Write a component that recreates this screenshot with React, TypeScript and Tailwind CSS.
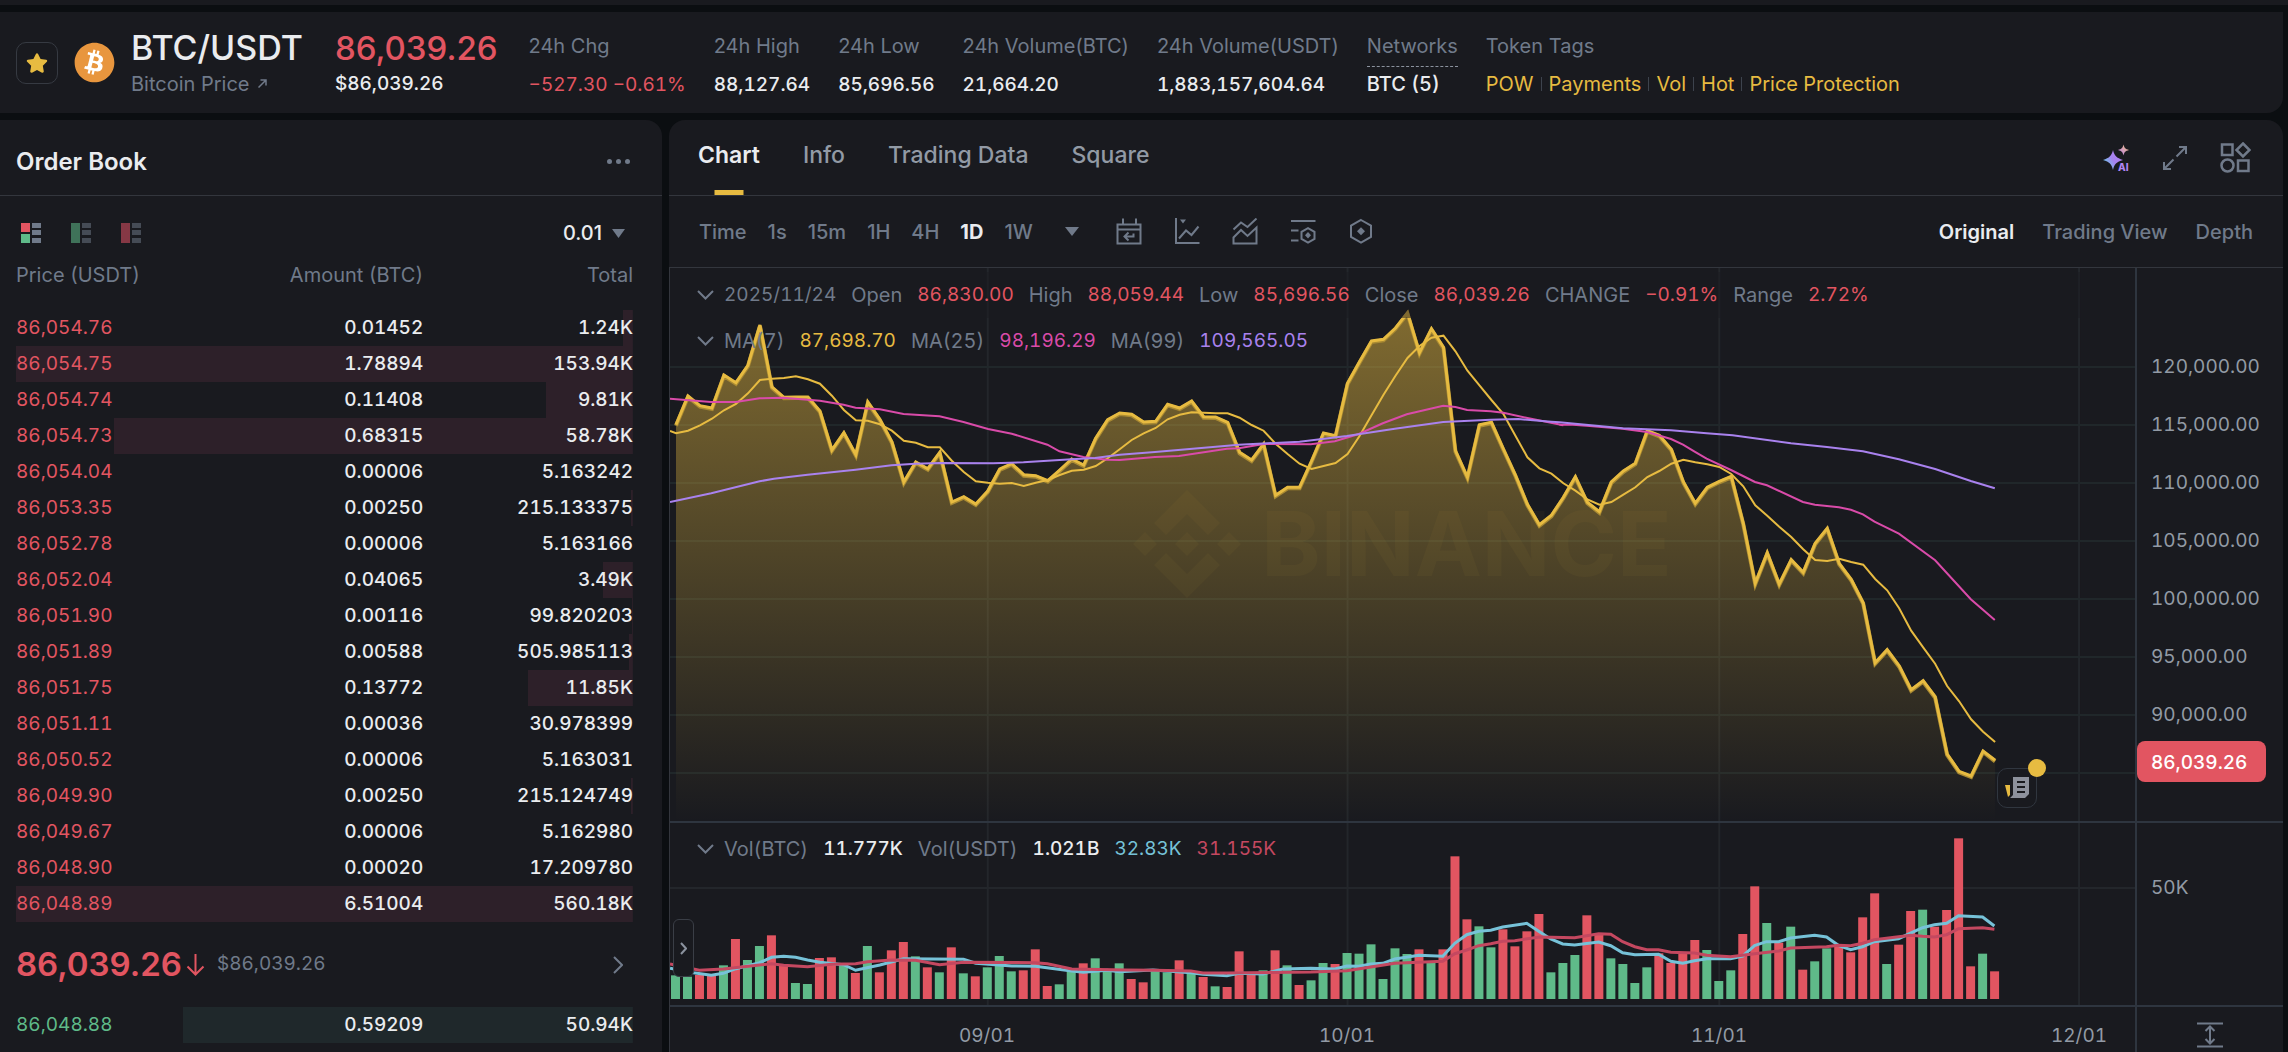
import type { ReactNode } from "react";
import { FaBitcoin, FaStar } from "react-icons/fa";

/* ---------- market data ---------- */

type Order = { price: string; amount: string; total: string; depth: number };

const asks: Order[] = [
  { price: "86,054.76", amount: "0.01452", total: "1.24K", depth: 10 },
  { price: "86,054.75", amount: "1.78894", total: "153.94K", depth: 617 },
  { price: "86,054.74", amount: "0.11408", total: "9.81K", depth: 87 },
  { price: "86,054.73", amount: "0.68315", total: "58.78K", depth: 519 },
  { price: "86,054.04", amount: "0.00006", total: "5.163242", depth: 0 },
  { price: "86,053.35", amount: "0.00250", total: "215.133375", depth: 2 },
  { price: "86,052.78", amount: "0.00006", total: "5.163166", depth: 0 },
  { price: "86,052.04", amount: "0.04065", total: "3.49K", depth: 30 },
  { price: "86,051.90", amount: "0.00116", total: "99.820203", depth: 1 },
  { price: "86,051.89", amount: "0.00588", total: "505.985113", depth: 4 },
  { price: "86,051.75", amount: "0.13772", total: "11.85K", depth: 105 },
  { price: "86,051.11", amount: "0.00036", total: "30.978399", depth: 0 },
  { price: "86,050.52", amount: "0.00006", total: "5.163031", depth: 0 },
  { price: "86,049.90", amount: "0.00250", total: "215.124749", depth: 2 },
  { price: "86,049.67", amount: "0.00006", total: "5.162980", depth: 0 },
  { price: "86,048.90", amount: "0.00020", total: "17.209780", depth: 0 },
  { price: "86,048.89", amount: "6.51004", total: "560.18K", depth: 617 },
];

const bids: Order[] = [{ price: "86,048.88", amount: "0.59209", total: "50.94K", depth: 450 }];

const stats = [
  { label: "24h High", value: "88,127.64" },
  { label: "24h Low", value: "85,696.56" },
  { label: "24h Volume(BTC)", value: "21,664.20" },
  { label: "24h Volume(USDT)", value: "1,883,157,604.64" },
];

const tags = ["POW", "Payments", "Vol", "Hot", "Price Protection"];

/* ---------- chart series (thirds of a pixel, one value per day) ---------- */

const STEP = 12;
const FIRST = 6;
const dayX = (i: number) => FIRST + i * STEP;

const closeA = [
  494, 408, 437, 444, 345, 368, 316, 195, 381, 412, 411, 411, 453, 570, 518, 584, 426, 478, 545, 666, 606, 626, 577, 726,
  710, 732, 693, 627, 611, 644, 647, 662, 630, 597, 615, 535, 479, 459, 463, 486, 484, 433, 444, 423, 470, 471, 487, 577,
  600, 552, 706, 682, 682, 603, 519, 527, 370, 305, 243, 238, 204, 158, 278, 206, 262, 572, 652, 494, 487, 567, 645, 733,
  794, 766, 712, 650, 727,
];
const closeB = [
  395, 306, 273, 250, 152, 166, 208, 305, 370, 322, 304, 289, 430, 610, 518, 612, 539, 577, 490, 445, 550, 598, 668, 848,
  809, 857, 929, 902, 950, 1122, 1174, 1188, 1113, 1141,
];
const ma7A = [
  520, 512, 496, 476, 451, 432, 400, 360, 356, 354, 349, 358, 371, 407, 450, 481, 482, 493, 512, 542, 548, 562, 562, 602,
  636, 664, 668, 671, 669, 678, 668, 660, 645, 632, 629, 618, 595, 568, 540, 520, 504, 478, 464, 457, 458, 460, 460, 473,
  495, 512, 551, 582, 611, 627, 618, 609, 582, 528, 466, 404, 347, 294, 258, 233, 227, 274, 332, 376, 420, 462, 527, 592,
  625, 641, 670, 692, 718,
];
const ma7B = [
  374, 366, 344, 322, 291, 273, 251, 239, 247, 253, 261, 282, 319, 376, 407, 440, 471, 508, 540, 543, 536, 546, 554, 597,
  631, 685, 752, 802, 851, 918, 964, 1018, 1055, 1086,
];

const toY = (a: number[], b: number[]) => [...a.map((v) => v / 3 - 8), ...b.map((v) => v / 3 + 112)];
const path = (pts: number[][]) => pts.map(([x, y]) => `${x.toFixed(1)},${y.toFixed(1)}`).join(" ");

const closeY = toY(closeA, closeB);
const closePts = closeY.map((y, i) => [dayX(i), y]);
const ma7Pts = [[0, 163], ...toY(ma7A, ma7B).map((y, i) => [dayX(i), y])];

/* Sparse line segments: origin, horizontal scale, then x/y pairs. */
const seg = (ox: number, oy: number, kx: number, v: number[]) => {
  const out: number[][] = [];
  for (let i = 0; i < v.length; i += 2) out.push([ox + v[i] / kx, oy + v[i + 1] / 3]);
  return out;
};

const ma25Pts = [
  ...seg(-10, -8, 3, [30, 416, 154, 426, 228, 426, 299, 415, 370, 413, 480, 422, 551, 434, 587, 443, 660, 448, 731, 462, 839, 469, 911, 486, 985, 507, 1056, 521, 1163, 554, 1199, 574, 1271, 591, 1342, 599, 1380, 600]),
  ...seg(430, -8, 3, [166, 591, 238, 588, 382, 566, 418, 565, 492, 552, 634, 553, 706, 544, 778, 522, 850, 490, 922, 463, 1031, 437, 1068, 441, 1103, 450, 1174, 454, 1212, 458, 1284, 474, 1392, 496]),
  ...seg(890, 112, 3, [0, 134, 40, 134, 82, 137, 190, 146, 263, 156, 335, 177, 371, 194, 406, 215, 442, 236, 515, 270, 587, 306, 623, 316, 731, 366, 767, 374, 839, 382, 875, 389, 911, 403, 946, 425, 1019, 461, 1128, 541, 1235, 658, 1307, 720]),
];
const ma99Pts = [
  ...seg(-10, -8, 3, [30, 726, 154, 700, 299, 664, 342, 656, 443, 644, 587, 629, 695, 616, 767, 611, 839, 609, 1000, 610, 1091, 607, 1236, 598, 1306, 594, 1380, 584]),
  ...seg(430, -8, 3, [166, 576, 418, 554, 600, 545, 742, 528, 886, 506, 1031, 486, 1174, 479, 1256, 477, 1356, 485]),
  ...seg(890, 112, 3, [0, 127, 190, 145, 335, 151, 442, 160, 520, 166, 695, 190, 803, 201, 911, 214, 1019, 238, 1128, 267, 1235, 303, 1307, 325]),
];

const volTop = [
  526, 530, 525, 525, 496, 417, 480, 438, 406, 497, 549, 552, 474, 472, 494, 519, 438, 517, 451, 426, 469, 502, 517, 442,
  520, 529, 502, 468, 514, 511, 448, 558, 553, 513, 490, 475, 513, 490, 537, 547, 512, 517, 481, 518, 531, 559, 561, 454,
  517, 511, 451, 496, 555, 541, 489, 492, 459, 461, 433, 537, 445, 462, 448, 487, 448, 169, 358, 379, 442, 388, 439, 394,
  342, 517, 489, 465, 346, 403, 475, 492, 549, 502, 460, 489, 458, 420, 450, 543, 511, 402, 259, 369, 428, 380, 509, 484,
  445, 436, 457, 352, 280, 492, 434, 333, 329, 380, 330, 115, 499, 461, 514,
];
const volSide =
  "ggrrgrggrrggrrgrgrrrgrgrgrgggrrrggrgggrrggrgrgrrrgrgrggrggggggrgrrrggrrrrgggrrgggg" +
  "rrrrgggrrgrgrggrrrrgrrgrrrrgr";

const volMa5 = [
  ...seg(-10, -23, 3, [30, 505, 100, 518, 154, 526, 190, 520, 228, 506, 299, 488, 335, 472, 371, 469, 407, 472, 443, 480, 480, 487, 551, 494, 587, 511, 660, 495, 731, 476, 911, 478, 948, 490, 1056, 498, 1127, 499, 1236, 513, 1271, 517, 1342, 511, 1380, 515]),
  ...seg(470, -23, 3, [40, 510, 154, 518, 190, 523, 262, 527, 298, 520, 370, 522, 430, 507, 514, 505, 586, 507, 622, 498, 658, 499, 694, 492, 730, 490, 766, 477, 838, 466, 910, 469, 946, 430, 982, 404, 1018, 394, 1054, 391, 1090, 381, 1162, 370, 1198, 394, 1234, 417, 1270, 432, 1306, 435, 1378, 426]),
  ...seg(930, -23, 2.279, [26, 437, 53, 458, 81, 464, 135, 463, 163, 484, 190, 490, 217, 482, 245, 476, 299, 476, 327, 468, 354, 437, 381, 425, 409, 425, 436, 414, 491, 406, 518, 411, 545, 436, 573, 449, 600, 440, 627, 425, 682, 416, 737, 383, 764, 374, 792, 370, 819, 347, 874, 351, 901, 378]),
];
const volMa10 = [
  ...seg(-10, -23, 3, [30, 492, 118, 511, 190, 507, 335, 491, 371, 496, 443, 500, 515, 493, 587, 491, 623, 485, 695, 480, 767, 481, 839, 494, 911, 487, 1127, 488, 1163, 491, 1236, 507, 1400, 510]),
  ...seg(470, -23, 3, [46, 511, 154, 513, 190, 519, 262, 519, 514, 516, 622, 512, 694, 501, 766, 490, 838, 487, 910, 484, 946, 461, 982, 450, 1018, 437, 1054, 431, 1090, 424, 1126, 422, 1200, 411, 1306, 413, 1378, 401]),
  ...seg(930, -23, 2.279, [26, 403, 53, 425, 81, 440, 108, 449, 135, 449, 163, 457, 217, 459, 245, 466, 299, 470, 354, 461, 409, 453, 436, 444, 518, 440, 545, 436, 573, 437, 600, 430, 627, 419, 710, 406, 737, 409, 764, 411, 792, 404, 819, 386, 874, 383, 901, 388]),
];

const monthX = [317, 677, 1049, 1409];

/* ---------- small pieces ---------- */

function Stat({ label, children, dashed }: { label: string; children: ReactNode; dashed?: boolean }) {
  return (
    <div className="flex flex-col items-start whitespace-nowrap">
      <span
        className={
          dashed
            ? "h-[33px] border-b border-dashed border-[#8b929e] leading-6 text-[#707a8a]"
            : "h-[33px] leading-6 text-[#707a8a]"
        }
      >
        {label}
      </span>
      <span className="mt-[3px] leading-7 font-medium text-[#eaecef] tabular-nums">{children}</span>
    </div>
  );
}

function BookIcon({ top, bottom, side }: { top: string; bottom: string; side: string }) {
  return (
    <svg width="20" height="20" viewBox="0 0 20 20" aria-hidden="true">
      <rect x="0" y="0" width="9" height="9" fill={top} />
      {top === bottom && <rect x="0" y="8" width="9" height="4" fill={top} />}
      <rect x="0" y="11" width="9" height="9" fill={bottom} />
      <rect x="11" y="0" width="9" height="5" fill={side} />
      <rect x="11" y="7" width="9" height="5" fill={side} />
      <rect x="11" y="15" width="9" height="5" fill={side} />
    </svg>
  );
}

function Chevron() {
  return (
    <svg width="17" height="10" viewBox="0 0 17 10" fill="none" stroke="#707a8a" strokeWidth="2" aria-hidden="true">
      <path d="M1 1l7.5 7.5L16 1" />
    </svg>
  );
}

function OrderRows({ rows, tone }: { rows: Order[]; tone: "ask" | "bid" }) {
  const fill = tone === "ask" ? "#2d2029" : "#1f282b";
  return (
    <tbody className="text-[19px]">
      {rows.map((o) => (
        <tr
          key={o.price}
          className="h-9"
          style={{ background: `linear-gradient(to left, ${fill} ${o.depth}px, transparent ${o.depth}px)` }}
        >
          <td className={tone === "ask" ? "text-[#e25561]" : "text-[#5fba89]"}>{o.price}</td>
          <td className="text-right font-medium text-[#eaecef]">{o.amount}</td>
          <td className="text-right font-medium text-[#eaecef]">{o.total}</td>
        </tr>
      ))}
    </tbody>
  );
}

function Cols() {
  return (
    <colgroup>
      <col className="w-[30%]" />
      <col className="w-[36%]" />
      <col className="w-[34%]" />
    </colgroup>
  );
}

/* ---------- header ---------- */

function Header() {
  return (
    <header className="mr-[5px] flex h-[101px] items-center rounded-br-2xl bg-[#191a1f] pl-4 text-xl">
      <button
        aria-label="Favourite"
        className="flex size-[42px] items-center justify-center rounded-[10px] border border-[#363a42]"
      >
        <FaStar className="size-[22px] text-[#e7bb41]" />
      </button>
      <span className="ml-4 flex size-[41px] rounded-full bg-[radial-gradient(#fff_60%,transparent_62%)]">
        <FaBitcoin className="size-full text-[#e8963e]" />
      </span>
      <div className="ml-4 flex flex-col whitespace-nowrap">
        <h1 className="text-[34px] leading-10 font-medium text-[#eaecef]">BTC/USDT</h1>
        <a href="#price" className="mt-0.5 flex items-center gap-2 leading-7 text-[#707a8a]">
          Bitcoin Price
          <svg width="9" height="9" viewBox="0 0 9 9" fill="none" stroke="#707a8a" strokeWidth="1.5" aria-hidden="true">
            <path d="M0.500 8.500L8 1M2.500 1H8v5.500" />
          </svg>
        </a>
      </div>
      <div className="ml-8 flex flex-col whitespace-nowrap">
        <span className="text-[33px] leading-10 font-medium text-[#e25561]">86,039.26</span>
        <span className="mt-0.5 text-[19px] leading-7 font-medium text-[#eaecef] tabular-nums">$86,039.26</span>
      </div>
      <div className="ml-[31px] flex gap-7 pt-[7px]">
        <Stat label="24h Chg">
          <span className="text-[19px] font-normal text-[#e25561]">−527.30 −0.61%</span>
        </Stat>
        {stats.map((s) => (
          <Stat key={s.label} label={s.label}>
            <span className="text-[19px]">{s.value}</span>
          </Stat>
        ))}
        <Stat label="Networks" dashed>
          BTC (5)
        </Stat>
        <Stat label="Token Tags">
          <span className="flex items-center">
            {tags.map((t, i) => (
              <span key={t} className="flex items-center">
                {i > 0 && <span className="mx-[7px] h-3.5 w-px bg-[#3d434d]" />}
                <a href={"#" + t.toLowerCase().replace(" ", "-")} className="font-normal text-[#e7bb41]">
                  {t}
                </a>
              </span>
            ))}
          </span>
        </Stat>
      </div>
    </header>
  );
}

/* ---------- order book ---------- */

function OrderBook() {
  return (
    <section className="w-[662px] shrink-0 rounded-tr-2xl bg-[#191a1f] text-xl">
      <div className="flex h-[76px] items-center justify-between border-b border-[#33363d] pt-2 pr-8 pl-4">
        <h2 className="text-2xl font-semibold text-[#eaecef]">Order Book</h2>
        <button aria-label="More" className="flex gap-1">
          <span className="size-[5px] rounded-full bg-[#707a8a]" />
          <span className="size-[5px] rounded-full bg-[#707a8a]" />
          <span className="size-[5px] rounded-full bg-[#707a8a]" />
        </button>
      </div>
      <div className="flex h-[54px] items-center gap-[30px] pt-5 pr-[37px] pl-[21px]">
        <button aria-label="Order book">
          <BookIcon top="#e25561" bottom="#5fba89" side="#707a8a" />
        </button>
        <button aria-label="Buy orders">
          <BookIcon top="#3f7259" bottom="#3f7259" side="#454b55" />
        </button>
        <button aria-label="Sell orders">
          <BookIcon top="#863845" bottom="#863845" side="#454b55" />
        </button>
        <button className="ml-auto flex items-center gap-2.5 font-medium text-[#eaecef]">
          0.01
          <svg width="13" height="9" viewBox="0 0 13 9" fill="#707a8a" aria-hidden="true">
            <path d="M0 0h13L6.500 9z" />
          </svg>
        </button>
      </div>
      <div className="pr-[29px] pl-4">
        <table className="w-full table-fixed tabular-nums">
          <Cols />
          <thead>
            <tr className="h-[60px] text-[#707a8a]">
              <th className="p-0 pb-2.5 text-left font-normal whitespace-nowrap">Price (USDT)</th>
              <th className="p-0 pb-2.5 text-right font-normal whitespace-nowrap">Amount (BTC)</th>
              <th className="p-0 pb-2.5 text-right font-normal">Total</th>
            </tr>
          </thead>
          <OrderRows rows={asks} tone="ask" />
        </table>
        <div className="flex h-[85px] items-center">
          <span className="text-[33px] font-semibold text-[#e25561]">86,039.26</span>
          <svg className="ml-1" width="19" height="22" viewBox="0 0 19 22" fill="none" stroke="#e25561" strokeWidth="2" aria-hidden="true">
            <path d="M9.500 0v20M1.500 12.500l8 8 8-8" />
          </svg>
          <span className="ml-3 text-[19px] text-[#707a8a] tabular-nums">$86,039.26</span>
          <a href="#trades" aria-label="More trades" className="mr-2.5 ml-auto">
            <svg width="10" height="18" viewBox="0 0 10 18" fill="none" stroke="#707a8a" strokeWidth="2" aria-hidden="true">
              <path d="M1 1l8 8-8 8" />
            </svg>
          </a>
        </div>
        <table className="w-full table-fixed tabular-nums">
          <Cols />
          <OrderRows rows={bids} tone="bid" />
        </table>
      </div>
    </section>
  );
}

/* ---------- chart ---------- */

function TabBar() {
  return (
    <nav className="flex h-[76px] items-stretch gap-[43px] border-b border-[#33363d] pr-8 pl-[29px] text-[23px] font-medium whitespace-nowrap text-[#929aa5]">
      <button className="relative pb-1 font-semibold text-[#eaecef]">
        Chart
        <span className="absolute bottom-0 left-1/2 h-[5px] w-[29px] -translate-x-1/2 bg-[#e7bb41]" />
      </button>
      <button className="pb-1">Info</button>
      <button className="pb-1">Trading Data</button>
      <button className="pb-1">Square</button>
      <div className="ml-auto flex items-center gap-8">
        <button aria-label="AI assistant">
          <svg width="27" height="28" viewBox="0 0 27 28" aria-hidden="true">
            <defs>
              <linearGradient id="ai" x1="0" y1="0.8" x2="1" y2="0.2">
                <stop offset="0" stopColor="#62d6e8" />
                <stop offset="0.5" stopColor="#a583f0" />
                <stop offset="1" stopColor="#b57cf2" />
              </linearGradient>
              <linearGradient id="ai2" x1="0" y1="1" x2="1" y2="0">
                <stop offset="0" stopColor="#b57cf2" />
                <stop offset="1" stopColor="#f5c47a" />
              </linearGradient>
            </defs>
            <path d="M10 6c1.200 5.500 3.500 8 10 10-6.500 1.800-8.800 4.300-10 10-1.300-5.700-3.500-8.200-10-10 6.500-2 8.700-4.500 10-10z" fill="url(#ai)" />
            <path d="M20.500 0.500c.7 3.200 1.800 4.500 5.500 5.500-3.700 1-4.800 2.300-5.500 5.500-.7-3.200-1.800-4.500-5.500-5.500 3.700-1 4.800-2.300 5.500-5.500z" fill="url(#ai2)" />
            <text x="15" y="27" fontSize="10" fontWeight="800" fill="#b184f2" fontFamily="Inter, sans-serif">
              AI
            </text>
          </svg>
        </button>
        <button aria-label="Expand">
          <svg width="26" height="26" viewBox="0 0 26 26" fill="none" stroke="#707a8a" strokeWidth="2" aria-hidden="true">
            <path d="M14.500 11.500L24 2M17 2h7v7M11.500 14.500L2 24M9 24H2v-7" />
          </svg>
        </button>
        <button aria-label="Layout">
          <svg width="31" height="31" viewBox="0 0 31 31" fill="none" stroke="#707a8a" strokeWidth="2.5" aria-hidden="true">
            <rect x="2" y="2.5" width="10.5" height="10.5" />
            <path d="M23 1.500l6.500 6.500-6.500 6.500L16.500 8z" />
            <circle cx="7.500" cy="23.500" r="6" />
            <rect x="18" y="18.5" width="10.5" height="10.5" />
          </svg>
        </button>
      </div>
    </nav>
  );
}

const toolIcons: { name: string; art: ReactNode }[] = [
  { name: "Date range", art: <path d="M1.500 6.500h23v19h-23zM1.500 11.500h23M7 0.500v6M20 0.500v6M8.500 18.500h9v-3M12.500 14.500l-4 4 4 4" /> },
  { name: "Chart type", art: <><path d="M2 0v25h23.500M5 20.500l7-8 5.500 4.500 7-8.500" /><path d="M6 1.500h6l-3 4z" fill="#707a8a" stroke="none" /></> },
  { name: "Indicators", art: <path d="M1.500 11.500L9 4.500l6.500 4.500L24.500 0.500M1.500 25.500v-6L9 12l6.500 6 9-8.500v16z" /> },
  { name: "Chart settings", art: <><path d="M1 3h24.500M1 12.500h7.500M1 22.500h7.500M18 10.200l6.500 3.600v7L18 24.500l-6.500-3.700v-7z" /><path d="M18 14l3 3.300-3 3.300-3-3.300z" fill="#707a8a" stroke="none" /></> },
  { name: "Tools", art: <><path d="M13 2l10 5.600v11.300L13 24.500 3 18.900V7.600z" /><path d="M13 9.200l4 4-4 4-4-4z" fill="#707a8a" stroke="none" /></> },
];

function Toolbar() {
  return (
    <div className="flex h-[72px] items-center border-b border-[#33363d] px-[30px] text-xl font-medium whitespace-nowrap text-[#707a8a]">
      <div className="flex items-center gap-[21px]">
        <button>Time</button>
        <button>1s</button>
        <button>15m</button>
        <button>1H</button>
        <button>4H</button>
        <button className="font-bold text-[#eaecef]">1D</button>
        <button>1W</button>
      </div>
      <button aria-label="More intervals" className="ml-8">
        <svg width="14" height="9" viewBox="0 0 14 9" fill="#707a8a" aria-hidden="true">
          <path d="M0 0h14L7 9z" />
        </svg>
      </button>
      <div className="ml-[37px] flex items-center gap-8">
        {toolIcons.map((t) => (
          <button key={t.name} aria-label={t.name}>
            <svg width="26" height="27" viewBox="0 0 26 27" fill="none" stroke="#707a8a" strokeWidth="2" aria-hidden="true">
              {t.art}
            </svg>
          </button>
        ))}
      </div>
      <div className="ml-auto flex gap-7">
        <button className="font-semibold text-[#eaecef]">Original</button>
        <button>Trading View</button>
        <button>Depth</button>
      </div>
    </div>
  );
}

function Legend({ items }: { items: [string, string][] }) {
  return (
    <div className="flex h-[30px] items-center gap-[15px] text-xl whitespace-nowrap tabular-nums">
      <span className="-mr-[5px] flex">
        <Chevron />
      </span>
      {items.map(([text, cls]) => (
        <span key={text} className={cls}>
          {text}
        </span>
      ))}
    </div>
  );
}

const dim = "text-[#707a8a]";
const red = "text-[19px] text-[#e25561]";
const bright = "text-[19px] font-medium text-[#eaecef]";

function PricePane() {
  return (
    <div className="relative h-[555px] border-b-2 border-[#2e353f]">
      <svg className="block h-full w-full" viewBox="0 0 1466 553" preserveAspectRatio="none" aria-label="BTC/USDT daily price">
        <defs>
          <linearGradient id="fill" gradientUnits="userSpaceOnUse" x1="0" y1="45" x2="0" y2="553">
            <stop offset="0" stopColor="#e7bb41" stopOpacity="0.5" />
            <stop offset="1" stopColor="#e7bb41" stopOpacity="0" />
          </linearGradient>
        </defs>
        {monthX.map((x) => (
          <rect key={x} x={x} y="0" width="2" height="553" fill="#23262b" />
        ))}
        {[98, 156, 214, 272, 330, 388, 446, 504].map((y) => (
          <rect key={y} x="0" y={y} width="1466" height="2" fill="#20272a" />
        ))}
        <polygon points={`${path(closePts)} ${dayX(110)},553 ${dayX(0)},553`} fill="url(#fill)" />
        <g fill="none" strokeLinejoin="miter">
          <polyline points={path(closePts.map(([x, y]) => [x, y + 1]))} stroke="#a98a33" strokeWidth="4" />
          <polyline points={path(closePts)} stroke="#e7bb41" strokeWidth="3" />
          <polyline points={path(ma7Pts)} stroke="#e7bb41" strokeWidth="2" />
          <polyline points={path(ma25Pts)} stroke="#d94ba9" strokeWidth="2" />
          <polyline points={path(ma99Pts)} stroke="#a982ee" strokeWidth="2" />
        </g>
      </svg>

      <div className="pointer-events-none absolute inset-x-0 top-[222px] flex items-center justify-center gap-5 text-[#e7bb41] opacity-[0.04]" aria-hidden="true">
        <svg width="108" height="108" viewBox="0 0 108 108" fill="currentColor">
          <path d="M54 0l33 33-12 12-21-21-21 21-12-12z" />
          <path d="M54 108l33-33-12-12-21 21-21-21-12 12z" />
          <path d="M54 42l12 12-12 12-12-12zM12 42l12 12-12 12L0 54zM96 42l12 12-12 12-12-12z" />
        </svg>
        <span className="text-[90px] leading-none font-bold">BINANCE</span>
      </div>

      <div className="absolute top-1 left-0 w-full bg-[#191a1f]/50 pt-2 pb-2 pl-[27px]">
        <Legend
          items={[
            ["2025/11/24", "text-[19px] text-[#707a8a]"],
            ["Open", dim],
            ["86,830.00", red],
            ["High", dim],
            ["88,059.44", red],
            ["Low", dim],
            ["85,696.56", red],
            ["Close", dim],
            ["86,039.26", red],
            ["CHANGE", dim],
            ["−0.91%", red],
            ["Range", dim],
            ["2.72%", red],
          ]}
        />
      </div>
      <div className="absolute top-[58px] left-[27px]">
        <Legend
          items={[
            ["MA(7)", dim],
            ["87,698.70", "text-[19px] text-[#e7bb41]"],
            ["MA(25)", dim],
            ["98,196.29", "text-[19px] text-[#d94ba9]"],
            ["MA(99)", dim],
            ["109,565.05", "text-[19px] text-[#a982ee]"],
          ]}
        />
      </div>

      <button
        aria-label="News"
        className="absolute top-[500px] left-[1327px] flex size-10 items-center justify-center rounded-[10px] border border-[#30363f] bg-[#191a1f]"
      >
        <svg width="25" height="22" viewBox="0 0 25 22" aria-hidden="true">
          <path d="M0 8h5v10l-2 2z" fill="#e7bb41" />
          <path d="M8 0h16v17l-4 4H5l3-3z" fill="#8d919c" />
          <path d="M12 5h8M12 10h8M12 15h8" stroke="#191a1f" strokeWidth="2" />
        </svg>
        <span className="absolute -top-[10px] -right-[10px] size-[18px] rounded-full bg-[#e7bb41]" />
      </button>
    </div>
  );
}

function VolumePane() {
  return (
    <div className="relative h-[184px] border-b-2 border-[#2e353f]">
      <svg className="block h-full w-full" viewBox="0 0 1466 182" preserveAspectRatio="none" aria-label="Volume">
        {monthX.map((x) => (
          <rect key={x} x={x} y="0" width="2" height="182" fill="#23262b" />
        ))}
        <rect x="0" y="64" width="1466" height="2" fill="#23262b" />
        {volTop.map((v, i) => {
          const top = v / 3 - 23;
          return <rect key={i} x={dayX(i) - 5} y={top} width="9" height={176 - top} fill={volSide[i] === "g" ? "#5fba89" : "#e25561"} />;
        })}
        <g fill="none" strokeWidth="3">
          <polyline points={path(volMa5)} stroke="#76c2d8" />
          <polyline points={path(volMa10)} stroke="#c44860" />
        </g>
      </svg>
      <div className="absolute top-[11px] left-[27px]">
        <Legend
          items={[
            ["Vol(BTC)", dim],
            ["11.777K", bright],
            ["Vol(USDT)", dim],
            ["1.021B", bright],
            ["32.83K", "text-[19px] text-[#76c2d8]"],
            ["31.155K", "text-[19px] text-[#c44860]"],
          ]}
        />
      </div>
      <button
        aria-label="Show drawing tools"
        className="absolute top-[96px] left-[3px] flex h-[58px] w-[21px] items-center justify-center rounded-md border border-[#3a3e46] bg-[#191a1f]"
      >
        <svg width="7" height="13" viewBox="0 0 7 13" fill="none" stroke="#8b929e" strokeWidth="2" aria-hidden="true">
          <path d="M1 1l5 5.500-5 5.500" />
        </svg>
      </button>
    </div>
  );
}

function ChartPanel() {
  return (
    <section className="mr-[5px] min-w-0 flex-1 rounded-t-2xl bg-[#191a1f]">
      <TabBar />
      <Toolbar />
      <div className="grid grid-cols-[1fr_148px] border-l border-[#33363d] text-[19px] text-[#929aa5] tabular-nums">
        <PricePane />
        <div className="relative border-b-2 border-l-2 border-[#2e353f] pt-[70px] pl-3.5">
          {["120,000.00", "115,000.00", "110,000.00", "105,000.00", "100,000.00", "95,000.00", "90,000.00"].map((p) => (
            <div key={p} className="flex h-[58px] items-center">
              {p}
            </div>
          ))}
          <div className="absolute top-[473px] left-0 flex h-[41px] w-[129px] items-center rounded-lg bg-[#e25561] pt-1 pl-3.5 font-medium text-white">
            86,039.26
          </div>
        </div>
        <VolumePane />
        <div className="flex items-start border-b-2 border-l-2 border-[#2e353f] pt-[51px] pl-3.5">50K</div>
        <div className="relative h-[45px]">
          <span className="absolute top-[15px] left-[317px] -translate-x-1/2">09/01</span>
          <span className="absolute top-[15px] left-[677px] -translate-x-1/2">10/01</span>
          <span className="absolute top-[15px] left-[1049px] -translate-x-1/2">11/01</span>
          <span className="absolute top-[15px] left-[1409px] -translate-x-1/2">12/01</span>
        </div>
        <div className="flex items-end justify-center border-l-2 border-[#2e353f] pb-1">
          <button aria-label="Fit scale">
            <svg width="26" height="26" viewBox="0 0 26 26" fill="none" stroke="#707a8a" strokeWidth="2" aria-hidden="true">
              <path d="M0 1.500h26M0 24.500h26M13 5v16M8.500 9L13 4.500 17.500 9M8.500 17l4.500 4.500 4.500-4.500" />
            </svg>
          </button>
        </div>
      </div>
    </section>
  );
}

export default function App() {
  return (
    <div className="flex min-h-screen flex-col gap-[7px] overflow-hidden bg-[#0b0e11] font-['Inter',sans-serif]">
      <div className="h-[5px] bg-[#191a1f]" />
      <Header />
      <main className="flex flex-1 items-stretch gap-[7px]">
        <OrderBook />
        <ChartPanel />
      </main>
    </div>
  );
}
